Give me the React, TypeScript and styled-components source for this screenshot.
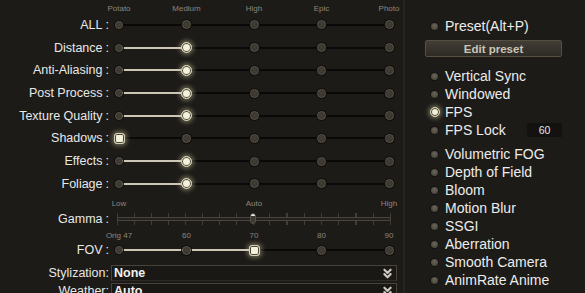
import styled, { createGlobalStyle } from "styled-components";
import { ChevronsDown } from "lucide-react";

const GlobalStyle = createGlobalStyle`
  html, body {
    margin: 0;
    padding: 0;
    background: #1d1b18;
  }
  body {
    font-family: "Liberation Sans", Arial, sans-serif;
    overflow: hidden;
  }
`;

const Page = styled.div`
  display: flex;
  width: 585px;
  height: 293px;
  overflow: hidden;
  background: #1d1b18;
`;

const LeftPanel = styled.div`
  width: 403px;
  display: flex;
  flex-direction: column;
  & > * {
    flex-shrink: 0;
  }
`;

const RightPanel = styled.div`
  flex: 1;
  border-left: 2px solid #262320;
  padding-top: 17px;
  display: flex;
  flex-direction: column;
  & > * {
    flex-shrink: 0;
  }
`;

const HeaderRow = styled.div<{ $h: number }>`
  height: ${(p) => p.$h}px;
  display: flex;
  align-items: flex-end;
  padding-left: 113px;
`;

const Row = styled.div<{ $h: number; $mt?: number }>`
  height: ${(p) => p.$h}px;
  margin-top: ${(p) => p.$mt ?? 0}px;
  display: flex;
  align-items: center;
`;

const Label = styled.div`
  width: 109px;
  text-align: right;
  font-size: 12.5px;
  color: #e8e8e6;
  white-space: nowrap;
`;

const Colon = styled.span<{ $gap?: number }>`
  margin-left: ${(p) => p.$gap ?? 3}px;
`;

const Marks = styled.div`
  width: 282px;
  display: flex;
  justify-content: space-between;
`;

const Mark = styled.div`
  width: 12px;
  display: flex;
  justify-content: center;
  white-space: nowrap;
  font-size: 8px;
  line-height: 10px;
  color: #8a867d;
`;

const Track = styled.div`
  position: relative;
  width: 282px;
  height: 14px;
  margin-left: 4px;
  display: flex;
  align-items: center;
  justify-content: space-between;
  &::before {
    content: "";
    position: absolute;
    left: 6px;
    right: 6px;
    top: 6px;
    height: 2px;
    background: #0a0908;
  }
`;

const Fill = styled.div`
  position: absolute;
  left: 6px;
  top: 6px;
  height: 2px;
  background: #cdc7b8;
`;

const NodeSlot = styled.div`
  position: relative;
  z-index: 1;
  width: 12px;
  height: 12px;
  display: flex;
  align-items: center;
  justify-content: center;
`;

const Dot = styled.div<{ $size: number }>`
  width: ${(p) => p.$size}px;
  height: ${(p) => p.$size}px;
  box-sizing: border-box;
  border-radius: 50%;
  background: radial-gradient(circle at 50% 45%, #433f35, #34302a);
  border: 1px solid #59544a;
  box-shadow: 0 0 0 1px #100f0d;
`;

const Knob = styled.div<{ $square?: boolean }>`
  width: 11px;
  height: 11px;
  box-sizing: border-box;
  border-radius: ${(p) => (p.$square ? "3px" : "50%")};
  border: 1.5px solid #d6d1b6;
  background: #f3f1dc;
  box-shadow: inset 0 0 0 1px #4b4738, 0 0 4px 2px rgba(215, 208, 160, 0.4);
`;

const Groove = styled.div`
  position: relative;
  width: 274px;
  height: 14px;
  margin-left: 8px;
  display: flex;
  align-items: center;
  justify-content: space-between;
  &::before {
    content: "";
    position: absolute;
    left: 0;
    right: 0;
    top: 5px;
    height: 4px;
    box-sizing: border-box;
    border: 1px solid #48443c;
    border-radius: 2px;
    background: #24211e;
  }
`;

const Tick = styled.div<{ $major?: boolean }>`
  width: ${(p) => (p.$major ? 2 : 1)}px;
  height: 12px;
  background: #423e36;
`;

const GammaKnob = styled.div`
  position: absolute;
  left: 133px;
  top: 1px;
  z-index: 1;
  width: 6px;
  height: 11px;
  box-sizing: border-box;
  border-radius: 3px;
  border: 1px solid #56514a;
  background: linear-gradient(#eeece4 0 2px, #3d3931 2px);
`;

const SelectBox = styled.div`
  width: 286px;
  height: 16px;
  margin-left: 2px;
  box-sizing: border-box;
  border: 1px solid #47433b;
  border-bottom-color: #2e2b27;
  background: #1a1815;
  display: flex;
  align-items: center;
  justify-content: space-between;
  padding: 0 1px 0 2px;
  font-size: 12.5px;
  font-weight: bold;
  color: #f0f0ee;
  svg {
    color: #cbc7bd;
  }
`;

const Item = styled.div<{ $mt?: number }>`
  height: 18px;
  margin-top: ${(p) => p.$mt ?? 0}px;
  display: flex;
  align-items: center;
  padding-left: 24px;
  font-size: 14px;
  color: #ececea;
  white-space: nowrap;
`;

const RadioSlot = styled.div`
  width: 11px;
  height: 11px;
  margin-right: 5px;
  display: flex;
  align-items: center;
  justify-content: center;
`;

const Radio = styled.div`
  width: 7px;
  height: 7px;
  border-radius: 50%;
  background: radial-gradient(circle at 50% 40%, #6a665a, #3c3930);
  box-shadow: 0 0 0 1px #141311;
`;

const RadioOn = styled.div`
  width: 10px;
  height: 10px;
  box-sizing: border-box;
  border-radius: 50%;
  border: 1.5px solid #d8d3b8;
  background: #f1efd8;
  box-shadow: inset 0 0 0 1px #4d4939, 0 0 4px 2px rgba(215, 208, 160, 0.4);
`;

const EditButton = styled.div`
  width: 137px;
  height: 17px;
  margin: 5px 0 0 20px;
  box-sizing: border-box;
  border: 1px solid #574f41;
  border-radius: 2px;
  background: linear-gradient(#423d35, #2e2a25);
  display: flex;
  align-items: center;
  justify-content: center;
  font-size: 11.5px;
  font-weight: bold;
  color: #c9c5b9;
`;

const NumberBox = styled.div`
  width: 35px;
  height: 14px;
  margin-left: auto;
  margin-right: 23px;
  background: #141210;
  display: flex;
  align-items: center;
  justify-content: center;
  font-size: 10.5px;
  color: #e6e6e4;
`;

const presetMarks = ["Potato", "Medium", "High", "Epic", "Photo"];

const quality: { name: string; sel: number | null; square?: boolean }[] = [
  { name: "ALL", sel: null },
  { name: "Distance", sel: 1 },
  { name: "Anti-Aliasing", sel: 1 },
  { name: "Post Process", sel: 1 },
  { name: "Texture Quality", sel: 1 },
  { name: "Shadows", sel: 0, square: true },
  { name: "Effects", sel: 1 },
  { name: "Foliage", sel: 1 },
];

const toggles1 = ["Vertical Sync", "Windowed", "FPS", "FPS Lock"];
const toggles2 = [
  "Volumetric FOG",
  "Depth of Field",
  "Bloom",
  "Motion Blur",
  "SSGI",
  "Aberration",
  "Smooth Camera",
  "AnimRate Anime",
];

const STEP = (282 - 12) / 4;

function Slider({ sel, square }: { sel: number | null; square?: boolean }) {
  return (
    <Track>
      {sel !== null && sel > 0 && <Fill style={{ width: sel * STEP }} />}
      {[0, 1, 2, 3, 4].map((i) => (
        <NodeSlot key={i}>
          {i === sel ? <Knob $square={square} /> : <Dot $size={i === 0 ? 8 : 9} />}
        </NodeSlot>
      ))}
    </Track>
  );
}

function Marker({ labels, h }: { labels: string[]; h: number }) {
  return (
    <HeaderRow $h={h}>
      <Marks>
        {labels.map((l, i) => (
          <Mark key={i}>{l}</Mark>
        ))}
      </Marks>
    </HeaderRow>
  );
}

function Toggle({ label, on, mt }: { label: string; on?: boolean; mt?: number }) {
  return (
    <Item $mt={mt}>
      <RadioSlot>{on ? <RadioOn /> : <Radio />}</RadioSlot>
      {label}
      {label === "FPS Lock" && <NumberBox>60</NumberBox>}
    </Item>
  );
}

export default function App() {
  return (
    <>
      <GlobalStyle />
      <Page>
        <LeftPanel>
          <Marker labels={presetMarks} h={13.6} />
          {quality.map((q) => (
            <Row key={q.name} $h={22.7}>
              <Label>
                {q.name}
                <Colon>:</Colon>
              </Label>
              <Slider sel={q.sel} square={q.square} />
            </Row>
          ))}

          <Marker labels={["Low", "", "Auto", "", "High"]} h={14} />
          <Row $h={20}>
            <Label>
              Gamma<Colon>:</Colon>
            </Label>
            <Groove>
              {Array.from({ length: 17 }).map((_, i) => (
                <Tick key={i} $major={i === 10 || i === 14} />
              ))}
              <GammaKnob />
            </Groove>
          </Row>

          <Marker labels={["Orig 47", "60", "70", "80", "90"]} h={12} />
          <Row $h={18}>
            <Label>
              FOV<Colon>:</Colon>
            </Label>
            <Slider sel={2} square />
          </Row>

          <Row $h={18} $mt={5}>
            <Label>
              Stylization<Colon $gap={0}>:</Colon>
            </Label>
            <SelectBox>
              None
              <ChevronsDown size={15} strokeWidth={3.4} />
            </SelectBox>
          </Row>
          <Row $h={18}>
            <Label>
              Weather<Colon $gap={0}>:</Colon>
            </Label>
            <SelectBox>
              Auto
              <ChevronsDown size={15} strokeWidth={3.4} />
            </SelectBox>
          </Row>
        </LeftPanel>

        <RightPanel>
          <Toggle label="Preset(Alt+P)" />
          <EditButton>Edit preset</EditButton>
          {toggles1.map((t, i) => (
            <Toggle key={t} label={t} on={t === "FPS"} mt={i === 0 ? 10 : 0} />
          ))}
          {toggles2.map((t, i) => (
            <Toggle key={t} label={t} mt={i === 0 ? 6 : 0} />
          ))}
        </RightPanel>
      </Page>
    </>
  );
}
